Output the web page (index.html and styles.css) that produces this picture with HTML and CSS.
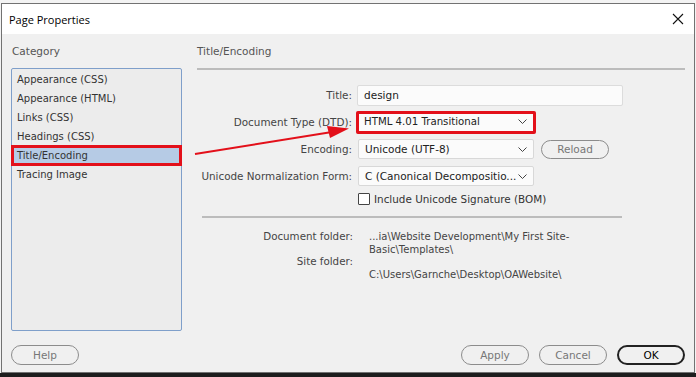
FILE: index.html
```html
<!DOCTYPE html>
<html lang="en">
<head>
    <meta charset="UTF-8">
    <title>Page Properties</title>
    <link rel="stylesheet" href="styles.css">
</head>
<body>
    <div class="screen">
        <div class="dialog">
            <div class="titlebar">
                <span class="title">Page Properties</span>
                <svg class="close" width="12" height="12" viewBox="0 0 12 12"><path d="M1 1L11 11M11 1L1 11" stroke="#111" stroke-width="1.1"/></svg>
            </div>
            <div class="main">
                <div class="sidebar">
                    <div class="heading">Category</div>
                    <ul class="category-list">
                        <li>Appearance (CSS)</li>
                        <li>Appearance (HTML)</li>
                        <li>Links (CSS)</li>
                        <li>Headings (CSS)</li>
                        <li class="selected marked">Title/Encoding</li>
                        <li>Tracing Image</li>
                    </ul>
                </div>
                <div class="panel">
                    <div class="heading panel-heading">Title/Encoding</div>
                    <div class="form">
                        <label class="form-label">Title:</label>
                        <div class="form-control"><input class="text-input" type="text" value="design"></div>

                        <label class="form-label">Document Type (DTD):</label>
                        <div class="form-control">
                            <div class="dropdown marked">
                                <span>HTML 4.01 Transitional</span>
                                <svg width="9" height="5" viewBox="0 0 9 5"><path d="M0.5 0.5L4.5 4.5L8.5 0.5" stroke="#444" fill="none"/></svg>
                            </div>
                        </div>

                        <label class="form-label">Encoding:</label>
                        <div class="form-control">
                            <div class="dropdown">
                                <span>Unicode (UTF-8)</span>
                                <svg width="9" height="5" viewBox="0 0 9 5"><path d="M0.5 0.5L4.5 4.5L8.5 0.5" stroke="#444" fill="none"/></svg>
                            </div>
                            <button class="btn reload">Reload</button>
                        </div>

                        <label class="form-label">Unicode Normalization Form:</label>
                        <div class="form-control">
                            <div class="dropdown">
                                <span>C (Canonical Decompositio...</span>
                                <svg width="9" height="5" viewBox="0 0 9 5"><path d="M0.5 0.5L4.5 4.5L8.5 0.5" stroke="#444" fill="none"/></svg>
                            </div>
                        </div>

                        <span></span>
                        <div class="form-control check-row">
                            <span class="checkbox"></span>
                            <span>Include Unicode Signature (BOM)</span>
                        </div>
                    </div>
                    <div class="separator"></div>
                    <div class="folders">
                        <div class="folder-labels">
                            <div>Document folder:</div>
                            <div>Site folder:</div>
                        </div>
                        <div class="folder-values">
                            <div>...ia\Website Development\My First Site-<br>Basic\Templates\</div>
                            <div>C:\Users\Garnche\Desktop\OAWebsite\</div>
                        </div>
                    </div>
                </div>
            </div>
            <div class="footer">
                <button class="btn">Help</button>
                <div class="footer-right">
                    <button class="btn">Apply</button>
                    <button class="btn">Cancel</button>
                    <button class="btn default">OK</button>
                </div>
            </div>
        </div>
        <div class="taskbar"></div>
    </div>
    <!-- annotation arrow drawn over the dialog -->
    <svg class="arrow" width="696" height="377" viewBox="0 0 696 377">
        <line x1="195" y1="154" x2="332" y2="132" stroke="#e3101a" stroke-width="2"/>
        <polygon points="349,128.5 327,126 330,138" fill="#e3101a"/>
    </svg>
</body>
</html>
```

FILE: styles.css
```css
* { box-sizing: border-box; }
body {
    margin: 0;
    width: 696px;
    height: 377px;
    overflow: hidden;
    background: #f3f3f3;
    font-family: 'DejaVu Sans', Tahoma, sans-serif;
    font-size: 10px;
    color: #444;
    position: relative;
}
.screen {
    padding: 3px 0 0 1px;
}
.dialog {
    width: 694px;
    height: 370px;
    border: 1px solid #727272;
    background: #f0f0f0;
    display: flex;
    flex-direction: column;
}
.taskbar {
    height: 4px;
    margin-left: -1px;
    background: #1d1d1d;
}
.titlebar {
    height: 30px;
    background: #fff;
    display: flex;
    align-items: center;
    justify-content: space-between;
    padding: 0 10px 0 7px;
}
.title {
    font-family: 'Open Sans', 'Noto Sans', sans-serif;
    font-size: 11px;
    color: #000;
}
.main {
    flex: 1;
    display: flex;
    padding: 9px 9px 0 9px;
}
.heading {
    height: 16px;
    line-height: 16px;
    font-size: 10.5px;
    color: #555;
}
.sidebar {
    width: 172px;
}
.sidebar .heading {
    padding-left: 1px;
    margin-bottom: 9px;
}
.category-list {
    list-style: none;
    margin: 0;
    padding: 1px 0 0;
    height: 263px;
    width: 171px;
    border: 1px solid #7f9fca;
    border-radius: 2px;
    background: #ececec;
}
.category-list li {
    height: 19px;
    line-height: 19px;
    padding-left: 5px;
    color: #333;
}
.category-list li.selected {
    background: #b6cbe5;
}
.marked {
    outline: 3px solid #e3101a;
    outline-offset: -2px;
}
.panel {
    flex: 1;
    margin-left: 14px;
}
.panel-heading {
    height: 27px;
    border-bottom: 2px solid #bcbcbc;
}
.form {
    display: grid;
    grid-template-columns: 152px auto;
    grid-template-rows: repeat(4, 20px) 12px;
    column-gap: 6px;
    row-gap: 7px;
    margin-top: 15px;
    padding-left: 3px;
}
.form-label {
    text-align: right;
    white-space: nowrap;
    line-height: 20px;
    font-size: 10.4px;
    color: #444;
}
.form-control {
    display: flex;
    align-items: center;
}
.text-input {
    width: 266px;
    height: 21px;
    margin-left: -1px;
    border: 1px solid #dcdcdc;
    border-radius: 2px;
    background: #fbfbfb;
    padding: 0 6px;
    font-family: inherit;
    font-size: 10.5px;
    color: #222;
}
.dropdown {
    width: 176px;
    height: 20px;
    border: 1px solid #d8d8d8;
    border-radius: 2px;
    background: #fbfbfb;
    display: flex;
    align-items: center;
    justify-content: space-between;
    padding: 0 6px 0 6px;
    font-size: 10.5px;
    color: #222;
}
.dropdown.marked {
    height: 23px;
    margin-left: -2px;
    width: 180px;
    padding: 0 8px 2px 7px;
    font-size: 10.2px;
    outline-offset: -3px;
}
.btn {
    width: 68px;
    height: 20px;
    border: 1px solid #8c8c8c;
    border-radius: 10px;
    background: #f0f0f0;
    font-family: inherit;
    font-size: 10.5px;
    color: #777;
    padding: 0;
}
.reload {
    margin-left: 7px;
    height: 19px;
}
.check-row {
    gap: 4px;
    font-size: 10.4px;
    color: #333;
}
.checkbox {
    width: 12px;
    height: 12px;
    border: 1px solid #444;
    border-radius: 1px;
    background: #fff;
}
.separator {
    width: 420px;
    margin: 11px 0 0 5px;
    border-top: 2px solid #bcbcbc;
}
.folders {
    display: flex;
    margin-top: 12px;
    padding-left: 5px;
    line-height: 13px;
    font-size: 10.3px;
}
.folder-labels {
    width: 151px;
    text-align: right;
}
.folder-labels div,
.folder-values div {
    margin-bottom: 12px;
}
.folder-values {
    margin-left: 16px;
    font-size: 10px;
}
.footer {
    display: flex;
    justify-content: space-between;
    padding: 0 9px 7px 9px;
}
.footer-right {
    display: flex;
    gap: 10px;
}
.btn.default {
    border: 2px solid #222;
    color: #000;
}
.arrow {
    position: absolute;
    left: 0;
    top: 0;
    pointer-events: none;
}
```
